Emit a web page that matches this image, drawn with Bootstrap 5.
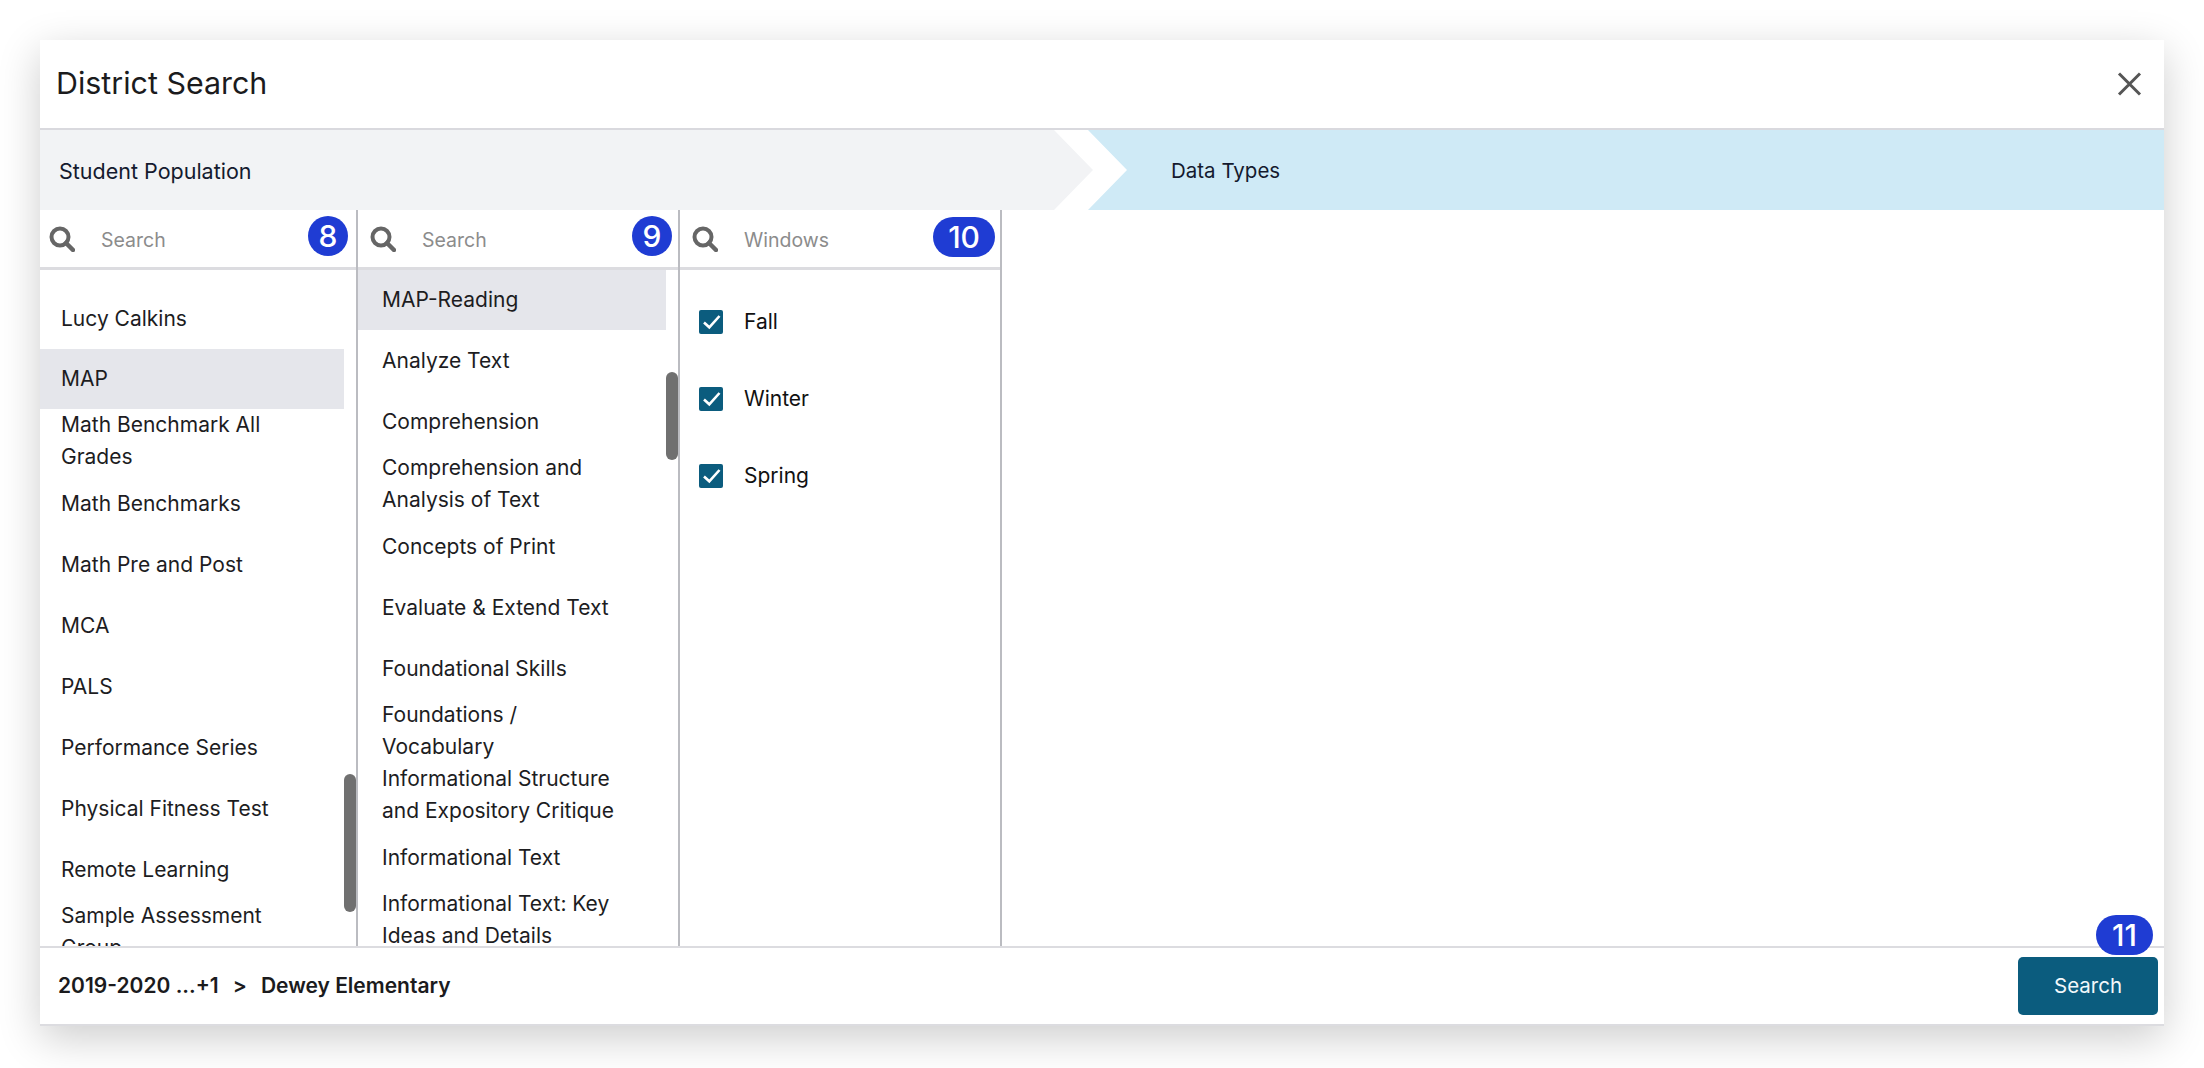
<!doctype html>
<html lang="en">
<head>
<meta charset="utf-8">
<title>District Search</title>
<link href="https://cdn.jsdelivr.net/npm/bootstrap@5.3.0/dist/css/bootstrap.min.css" rel="stylesheet">
<style>
html,body{height:100%;background:#fff;overflow:hidden}
body{font-family:"Inter","Liberation Sans",sans-serif;color:#1d1d1f}
.shell{padding:40px;height:1068px}
.sheet{width:2124px;height:986px;border:0;border-radius:0;background:#fff;box-shadow:0 12px 40px rgba(0,0,0,.2);border-bottom:2px solid #dcdce0;overflow:visible}
.sheet-head{height:90px;padding:0 22px 2px 16px;border-bottom:2px solid #d9d9de;border-radius:0}
.sheet-title{font-size:30.4px;font-weight:400;color:#1b1b1d;margin:0;line-height:1}
.closer{background:none;border:0;padding:2px 0 0;line-height:0}
.steps{height:80px;flex:none}
.step-a{width:1053px;background:#f2f3f5;clip-path:polygon(0 0,1014px 0,100% 50%,1014px 100%,0 100%);padding:2px 0 0 19px;font-size:21.5px;color:#141a2e}
.step-b{flex:1;margin-left:-5px;background:#cfeaf6;clip-path:polygon(0 0,100% 0,100% 100%,0 100%,39px 50%);padding:2px 0 0 83px;font-size:20.5px;color:#141a2e}
.panes{flex:1;min-height:0;overflow:hidden}
.pane{position:relative;flex:none;height:100%;border-right:2px solid #bbbcc1;overflow:hidden}
.pane-a{width:318px}.pane-b{width:322px}.pane-c{width:322px}
.pane-head{height:60px;border-bottom:3px solid #dcdce0;padding:6px 6px 0 12px}
.pane-a .pane-head{padding:6px 8px 0 9px}.pane-c .pane-head{padding-right:5px}
.lens{width:26px;height:26px;flex:none;margin-top:10px}
.hint{font-size:19.5px;color:#8c8c8c;margin-left:26px;margin-top:10px;line-height:28px}
.count{background:#1f3cd3;color:#fff;font-family:"Inter","Liberation Sans",sans-serif;font-weight:500;font-size:30px;line-height:40px;height:40px;min-width:40px;padding:0 15px;border-radius:20px;text-align:center}
.pane-c .count{margin-top:1px}
.count-one{padding:0}
.picks{border-radius:0}
.pick{border:0;background:none;min-height:61px;padding:0 12px 0 21px;margin-right:12px;font-size:21px;line-height:32px;color:#1d1d1f;display:flex;align-items:center}
.pane-a .picks{padding-top:18px}
.pane-b .pick{padding-left:24px}
.pick-on{background:#e5e6eb}
.pane-a .pick-on{min-height:60px}
.pane-b .pick-on{min-height:60px}
.thumb{position:absolute;right:0;width:12px;background:#707070;border-radius:6px}
.thumb-a{top:564px;height:138px}
.thumb-b{top:162px;height:88px}
.tick-row{font-size:21px;color:#111;line-height:32px;padding-left:19px}
.tick-row+.tick-row{margin-top:45px}
.tick{width:24px;height:24px;flex:none;margin-right:21px}
.picks-c{padding-top:36px}
.sheet-foot{height:78px;padding:0 6px 0 18px;border-top:2px solid #dcdce0;position:relative;border-radius:0}
.crumb{font-size:21px;font-weight:600;color:#1b1b1d;margin:0}
.crumb-sep{margin:0 14px}
.go{width:140px;height:58px;background:#0b5c7e;color:#f2f8fb;border:0;border-radius:5px;font-size:20.5px}
.count-float{position:absolute;right:11px;top:-33px;width:57px;padding:0}
</style>
</head>
<body>
<div class="shell">
  <div class="modal-content sheet d-flex flex-column">
    <div class="modal-header sheet-head d-flex align-items-center justify-content-between flex-shrink-0">
      <h1 class="sheet-title">District Search</h1>
      <button class="closer" type="button" aria-label="Close"><svg width="25" height="24" viewBox="0 0 25 24"><path d="M2 1.5 23 22.5M23 1.5 2 22.5" stroke="#555" stroke-width="3" fill="none"/></svg></button>
    </div>
    <div class="steps d-flex">
      <div class="step-a d-flex align-items-center">Student Population</div>
      <div class="step-b d-flex align-items-center">Data Types</div>
    </div>
    <div class="panes d-flex">
      <div class="pane pane-a">
        <div class="pane-head d-flex align-items-start">
          <svg class="lens" viewBox="0 0 26 26"><circle cx="11" cy="11" r="8.5" fill="none" stroke="#666" stroke-width="4"/><path d="M17 17 24 24" stroke="#666" stroke-width="4.5" stroke-linecap="round"/></svg>
          <span class="hint">Search</span>
          <span class="badge count count-one ms-auto">8</span>
        </div>
        <div class="list-group list-group-flush picks">
          <div class="list-group-item pick">Lucy Calkins</div>
          <div class="list-group-item pick pick-on">MAP</div>
          <div class="list-group-item pick">Math Benchmark All<br>Grades</div>
          <div class="list-group-item pick">Math Benchmarks</div>
          <div class="list-group-item pick">Math Pre and Post</div>
          <div class="list-group-item pick">MCA</div>
          <div class="list-group-item pick">PALS</div>
          <div class="list-group-item pick">Performance Series</div>
          <div class="list-group-item pick">Physical Fitness Test</div>
          <div class="list-group-item pick">Remote Learning</div>
          <div class="list-group-item pick">Sample Assessment<br>Group</div>
        </div>
        <div class="thumb thumb-a"></div>
      </div>
      <div class="pane pane-b">
        <div class="pane-head d-flex align-items-start">
          <svg class="lens" viewBox="0 0 26 26"><circle cx="11" cy="11" r="8.5" fill="none" stroke="#666" stroke-width="4"/><path d="M17 17 24 24" stroke="#666" stroke-width="4.5" stroke-linecap="round"/></svg>
          <span class="hint">Search</span>
          <span class="badge count count-one ms-auto">9</span>
        </div>
        <div class="list-group list-group-flush picks">
          <div class="list-group-item pick pick-on">MAP-Reading</div>
          <div class="list-group-item pick">Analyze Text</div>
          <div class="list-group-item pick">Comprehension</div>
          <div class="list-group-item pick">Comprehension and<br>Analysis of Text</div>
          <div class="list-group-item pick">Concepts of Print</div>
          <div class="list-group-item pick">Evaluate &amp; Extend Text</div>
          <div class="list-group-item pick">Foundational Skills</div>
          <div class="list-group-item pick">Foundations /<br>Vocabulary</div>
          <div class="list-group-item pick">Informational Structure<br>and Expository Critique</div>
          <div class="list-group-item pick">Informational Text</div>
          <div class="list-group-item pick">Informational Text: Key<br>Ideas and Details</div>
        </div>
        <div class="thumb thumb-b"></div>
      </div>
      <div class="pane pane-c">
        <div class="pane-head d-flex align-items-start">
          <svg class="lens" viewBox="0 0 26 26"><circle cx="11" cy="11" r="8.5" fill="none" stroke="#666" stroke-width="4"/><path d="M17 17 24 24" stroke="#666" stroke-width="4.5" stroke-linecap="round"/></svg>
          <span class="hint">Windows</span>
          <span class="badge count ms-auto">10</span>
        </div>
        <div class="picks-c">
          <div class="tick-row d-flex align-items-center"><svg class="tick" viewBox="0 0 24 24"><rect width="24" height="24" rx="2" fill="#0b5c7e"/><path d="M5 12.5 10.3 17.3 20.5 6" fill="none" stroke="#fff" stroke-width="2.6"/></svg>Fall</div>
          <div class="tick-row d-flex align-items-center"><svg class="tick" viewBox="0 0 24 24"><rect width="24" height="24" rx="2" fill="#0b5c7e"/><path d="M5 12.5 10.3 17.3 20.5 6" fill="none" stroke="#fff" stroke-width="2.6"/></svg>Winter</div>
          <div class="tick-row d-flex align-items-center"><svg class="tick" viewBox="0 0 24 24"><rect width="24" height="24" rx="2" fill="#0b5c7e"/><path d="M5 12.5 10.3 17.3 20.5 6" fill="none" stroke="#fff" stroke-width="2.6"/></svg>Spring</div>
        </div>
      </div>
    </div>
    <div class="modal-footer sheet-foot d-flex align-items-center justify-content-between flex-shrink-0 flex-nowrap">
      <p class="crumb">2019-2020 ...+1<span class="crumb-sep">&gt;</span>Dewey Elementary</p>
      <span class="badge count count-float">11</span>
      <button class="btn go" type="button">Search</button>
    </div>
  </div>
</div>
<script src="https://cdn.jsdelivr.net/npm/bootstrap@5.3.0/dist/js/bootstrap.bundle.min.js"></script>
</body>
</html>
